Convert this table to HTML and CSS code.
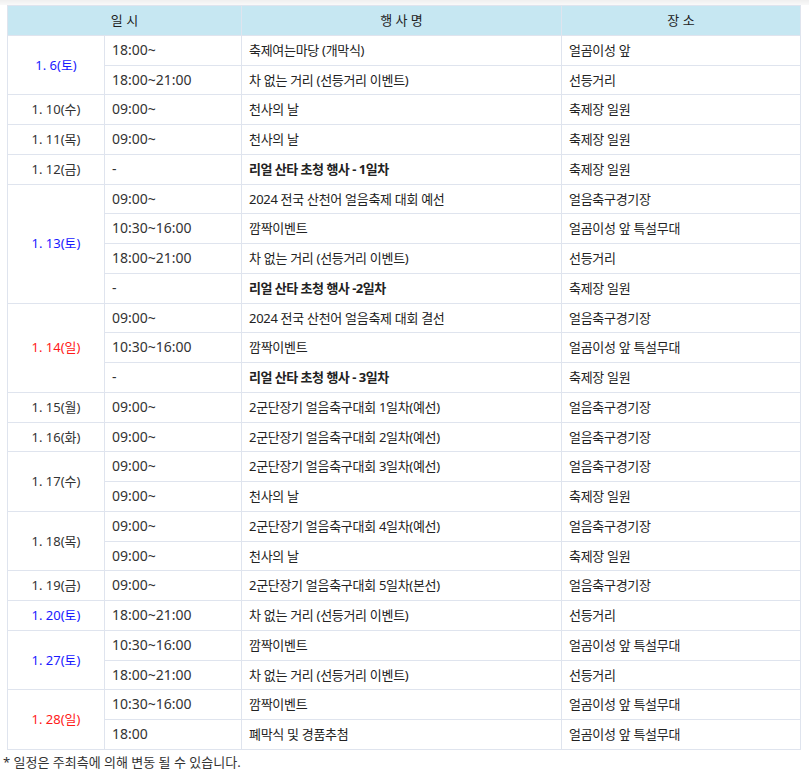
FILE: index.html
```html
<!DOCTYPE html>
<html lang="ko">
<head>
<meta charset="utf-8">
<title>행사 일정</title>
<link rel="stylesheet" href="styles.css">
</head>
<body>
<div class="topband"></div>
<div class="wrap">
<table class="sched">
  <colgroup>
    <col class="c1"><col class="c2"><col class="c3"><col class="c4">
  </colgroup>
  <thead>
    <tr><th colspan="2">일 시</th><th>행 사 명</th><th>장 소</th></tr>
  </thead>
  <tbody>
    <tr><td class="date sat" rowspan="2">1. 6(토)</td><td class="time">18:00~</td><td class="ev">축제여는마당 (개막식)</td><td class="pl">얼곰이성 앞</td></tr>
    <tr><td class="time">18:00~21:00</td><td class="ev">차 없는 거리 (선등거리 이벤트)</td><td class="pl">선등거리</td></tr>
    <tr><td class="date">1. 10(수)</td><td class="time">09:00~</td><td class="ev">천사의 날</td><td class="pl">축제장 일원</td></tr>
    <tr><td class="date">1. 11(목)</td><td class="time">09:00~</td><td class="ev">천사의 날</td><td class="pl">축제장 일원</td></tr>
    <tr><td class="date">1. 12(금)</td><td class="time">-</td><td class="ev"><b>리얼 산타 초청 행사 - 1일차</b></td><td class="pl">축제장 일원</td></tr>
    <tr><td class="date sat" rowspan="4">1. 13(토)</td><td class="time">09:00~</td><td class="ev">2024 전국 산천어 얼음축제 대회 예선</td><td class="pl">얼음축구경기장</td></tr>
    <tr><td class="time">10:30~16:00</td><td class="ev">깜짝이벤트</td><td class="pl">얼곰이성 앞 특설무대</td></tr>
    <tr><td class="time">18:00~21:00</td><td class="ev">차 없는 거리 (선등거리 이벤트)</td><td class="pl">선등거리</td></tr>
    <tr><td class="time">-</td><td class="ev"><b>리얼 산타 초청 행사 -2일차</b></td><td class="pl">축제장 일원</td></tr>
    <tr><td class="date sun" rowspan="3">1. 14(일)</td><td class="time">09:00~</td><td class="ev">2024 전국 산천어 얼음축제 대회 결선</td><td class="pl">얼음축구경기장</td></tr>
    <tr><td class="time">10:30~16:00</td><td class="ev">깜짝이벤트</td><td class="pl">얼곰이성 앞 특설무대</td></tr>
    <tr><td class="time">-</td><td class="ev"><b>리얼 산타 초청 행사 - 3일차</b></td><td class="pl">축제장 일원</td></tr>
    <tr><td class="date">1. 15(월)</td><td class="time">09:00~</td><td class="ev">2군단장기 얼음축구대회 1일차(예선)</td><td class="pl">얼음축구경기장</td></tr>
    <tr><td class="date">1. 16(화)</td><td class="time">09:00~</td><td class="ev">2군단장기 얼음축구대회 2일차(예선)</td><td class="pl">얼음축구경기장</td></tr>
    <tr><td class="date" rowspan="2">1. 17(수)</td><td class="time">09:00~</td><td class="ev">2군단장기 얼음축구대회 3일차(예선)</td><td class="pl">얼음축구경기장</td></tr>
    <tr><td class="time">09:00~</td><td class="ev">천사의 날</td><td class="pl">축제장 일원</td></tr>
    <tr><td class="date" rowspan="2">1. 18(목)</td><td class="time">09:00~</td><td class="ev">2군단장기 얼음축구대회 4일차(예선)</td><td class="pl">얼음축구경기장</td></tr>
    <tr><td class="time">09:00~</td><td class="ev">천사의 날</td><td class="pl">축제장 일원</td></tr>
    <tr><td class="date">1. 19(금)</td><td class="time">09:00~</td><td class="ev">2군단장기 얼음축구대회 5일차(본선)</td><td class="pl">얼음축구경기장</td></tr>
    <tr><td class="date sat">1. 20(토)</td><td class="time">18:00~21:00</td><td class="ev">차 없는 거리 (선등거리 이벤트)</td><td class="pl">선등거리</td></tr>
    <tr><td class="date sat" rowspan="2">1. 27(토)</td><td class="time">10:30~16:00</td><td class="ev">깜짝이벤트</td><td class="pl">얼곰이성 앞 특설무대</td></tr>
    <tr><td class="time">18:00~21:00</td><td class="ev">차 없는 거리 (선등거리 이벤트)</td><td class="pl">선등거리</td></tr>
    <tr><td class="date sun" rowspan="2">1. 28(일)</td><td class="time">10:30~16:00</td><td class="ev">깜짝이벤트</td><td class="pl">얼곰이성 앞 특설무대</td></tr>
    <tr><td class="time">18:00</td><td class="ev">폐막식 및 경품추첨</td><td class="pl">얼곰이성 앞 특설무대</td></tr>
  </tbody>
</table>
<p class="note">* 일정은 주최측에 의해 변동 될 수 있습니다.</p>
</div>
</body>
</html>
```
FILE: styles.css
```css
html, body {
  margin: 0;
  padding: 0;
  background: #ffffff;
}
body {
  font-family: "Noto Sans", "Noto Sans CJK KR", sans-serif;
  font-size: 13px;
  color: #222222;
}
.topband {
  height: 5px;
  background: linear-gradient(#efefef, #f9f9f9);
}
.wrap {
  padding: 0 9px 0 7px;
}
.sched {
  width: 793px;
  border-collapse: collapse;
  table-layout: fixed;
}
.c1 { width: 97px; }
.c2 { width: 137px; }
.c3 { width: 320px; }
.c4 { width: 239px; }
.sched th,
.sched td {
  border: 1px solid #dfe4ee;
  line-height: 16.75px;
  padding: 6px 7px;
  white-space: nowrap;
  overflow: hidden;
}
.sched th {
  background: #c6e7f2;
  font-weight: normal;
  text-align: center;
  color: #222222;
  padding: 6px 7px 6px;
  height: 16.75px;
}
.date {
  text-align: center;
  color: #333333;
}
.date.sat { color: #1a1aff; }
.date.sun { color: #ff1a1a; }
.time {
  font-size: 14px;
  color: #333333;
}
.ev,
.pl {
  letter-spacing: -0.3px;
}
.ev b {
  font-weight: bold;
  letter-spacing: -0.5px;
}
.pl {
  padding-left: 8px;
}
.note {
  margin: 3px 0 0 -4px;
  font-size: 13px;
  letter-spacing: 0;
  color: #333333;
  line-height: 18px;
}
```
